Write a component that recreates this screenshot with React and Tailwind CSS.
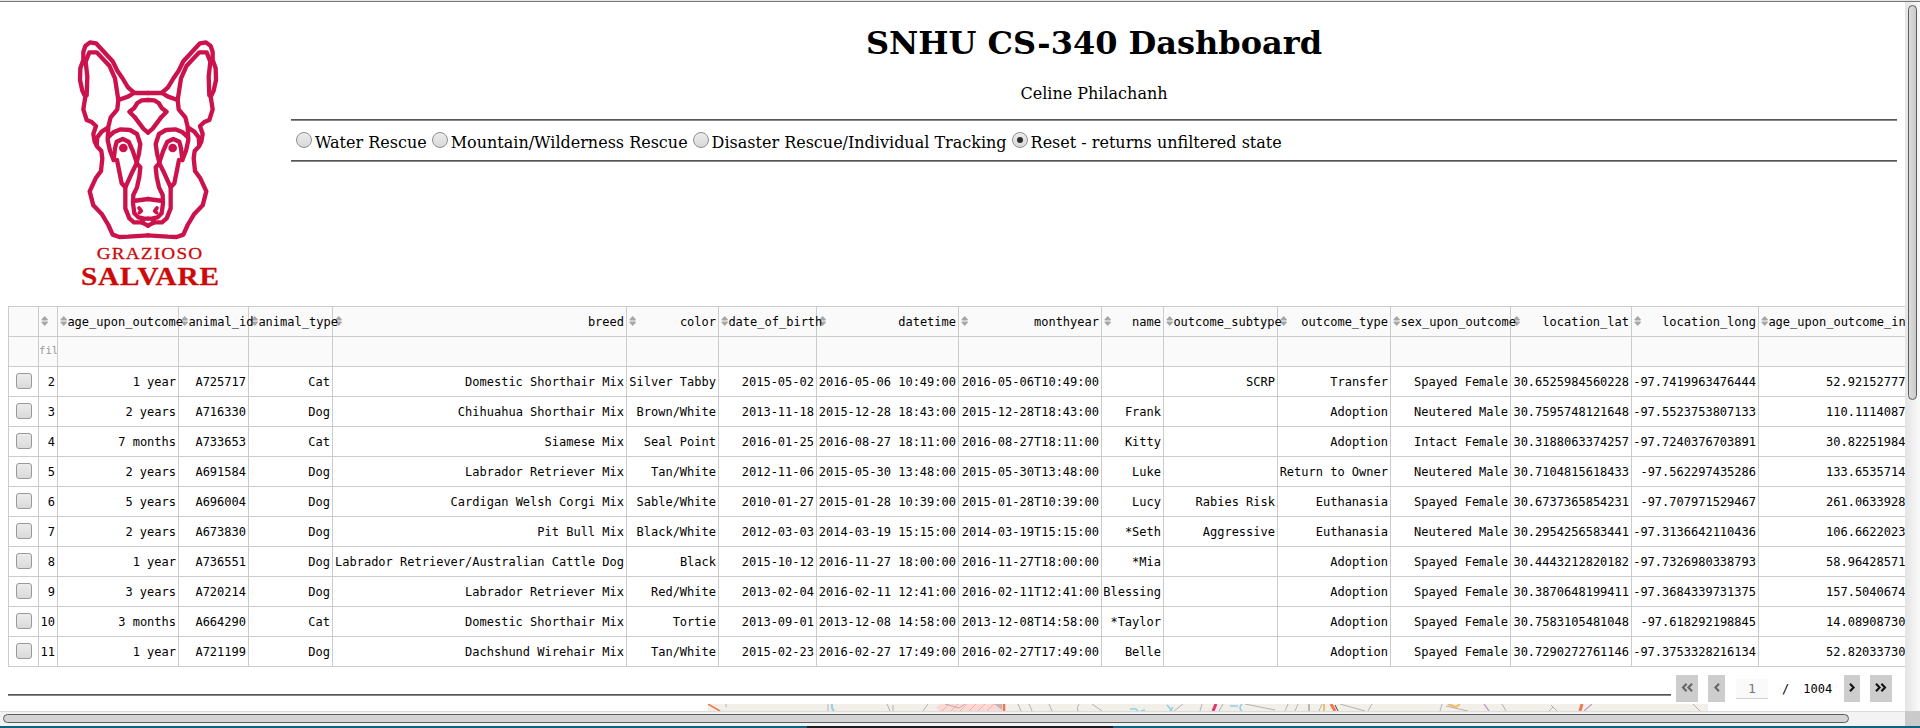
import React from "react";

const COLS =
  "grid grid-cols-[30px_19px_121px_70px_84px_294px_92px_98px_142px_143px_62px_114px_113px_120px_121px_127px_260px] w-[2010px]";

const headers = [
  "", "", "age_upon_outcome", "animal_id", "animal_type", "breed", "color", "date_of_birth", "datetime",
  "monthyear", "name", "outcome_subtype", "outcome_type", "sex_upon_outcome", "location_lat", "location_long",
  "age_upon_outcome_in",
];

const rows = [
  ["2", "1 year", "A725717", "Cat", "Domestic Shorthair Mix", "Silver Tabby", "2015-05-02", "2016-05-06 10:49:00", "2016-05-06T10:49:00", "", "SCRP", "Transfer", "Spayed Female", "30.6525984560228", "-97.7419963476444", "52.92152777"],
  ["3", "2 years", "A716330", "Dog", "Chihuahua Shorthair Mix", "Brown/White", "2013-11-18", "2015-12-28 18:43:00", "2015-12-28T18:43:00", "Frank", "", "Adoption", "Neutered Male", "30.7595748121648", "-97.5523753807133", "110.1114087"],
  ["4", "7 months", "A733653", "Cat", "Siamese Mix", "Seal Point", "2016-01-25", "2016-08-27 18:11:00", "2016-08-27T18:11:00", "Kitty", "", "Adoption", "Intact Female", "30.3188063374257", "-97.7240376703891", "30.82251984"],
  ["5", "2 years", "A691584", "Dog", "Labrador Retriever Mix", "Tan/White", "2012-11-06", "2015-05-30 13:48:00", "2015-05-30T13:48:00", "Luke", "", "Return to Owner", "Neutered Male", "30.7104815618433", "-97.562297435286", "133.6535714"],
  ["6", "5 years", "A696004", "Dog", "Cardigan Welsh Corgi Mix", "Sable/White", "2010-01-27", "2015-01-28 10:39:00", "2015-01-28T10:39:00", "Lucy", "Rabies Risk", "Euthanasia", "Spayed Female", "30.6737365854231", "-97.707971529467", "261.0633928"],
  ["7", "2 years", "A673830", "Dog", "Pit Bull Mix", "Black/White", "2012-03-03", "2014-03-19 15:15:00", "2014-03-19T15:15:00", "*Seth", "Aggressive", "Euthanasia", "Neutered Male", "30.2954256583441", "-97.3136642110436", "106.6622023"],
  ["8", "1 year", "A736551", "Dog", "Labrador Retriever/Australian Cattle Dog", "Black", "2015-10-12", "2016-11-27 18:00:00", "2016-11-27T18:00:00", "*Mia", "", "Adoption", "Spayed Female", "30.4443212820182", "-97.7326980338793", "58.96428571"],
  ["9", "3 years", "A720214", "Dog", "Labrador Retriever Mix", "Red/White", "2013-02-04", "2016-02-11 12:41:00", "2016-02-11T12:41:00", "Blessing", "", "Adoption", "Spayed Female", "30.3870648199411", "-97.3684339731375", "157.5040674"],
  ["10", "3 months", "A664290", "Cat", "Domestic Shorthair Mix", "Tortie", "2013-09-01", "2013-12-08 14:58:00", "2013-12-08T14:58:00", "*Taylor", "", "Adoption", "Spayed Female", "30.7583105481048", "-97.618292198845", "14.08908730"],
  ["11", "1 year", "A721199", "Dog", "Dachshund Wirehair Mix", "Tan/White", "2015-02-23", "2016-02-27 17:49:00", "2016-02-27T17:49:00", "Belle", "", "Adoption", "Spayed Female", "30.7290272761146", "-97.3753328216134", "52.82033730"],
];

function HalfFace() {
  return (
    <g>
      <path d="M402 278 L384 262 L367 234 L352 212 L338 184 L288 130 L270 127 L256 138 L250 156 L250 180 L241 205 L240 240 L247 272 L256 290 L250 328 L260 360 L275 366 L288 378 L280 402 L284 425 L292 440 L304 453 L307 475 L303 513 L287 535 L269 574 L280 616 L306 643 L325 675 L338 704 L358 711 L385 710 L445 706" />
      <path d="M260 286 L262 230 L257 185 L268 157 L290 157 L328 197 L345 235 L355 300 L352 328 L332 352 L325 380 L323 420 L330 452 L341 480" />
      <path d="M445 279 H402 L384 290 L355 300" />
      <path d="M445 300 L425 301 L412 309 L402 325 L388 335 L403 350 L430 386 L444 398" />
      <path d="M324 412 L340 397 L362 388 L390 390 L411 402 L421 432 L417 460 L410 487" />
      <path d="M324 383 L305 395 L292 412 L290 436" />
      <path d="M341 480 L345 445 L350 425 L368 417 L386 425 L398 452 L410 487" />
      <path d="M351 480 L365 550 L376 562 L395 520 L410 490 L421 502 L418 530 L411 562 L400 585 L399 610 L403 640 L415 652 L430 655 L444 656" />
      <path d="M376 560 V625 L388 655 L402 667 L425 667 L444 677" />
      <path d="M425 667 L432 657" />
      <path d="M399 603 L445 597" />
      <circle cx="370" cy="444" r="13" fill="#cc124c" stroke="none" />
      <path d="M417 624 L424 633 L418 638" strokeWidth="11" />
    </g>
  );
}

function Logo() {
  return (
    <svg className="block h-[250px] w-[152px]" viewBox="216 114 456 750">
      <g fill="none" stroke="#cc124c" strokeWidth="13" strokeLinejoin="round" strokeLinecap="round">
        <HalfFace />
        <g transform="translate(888 0) scale(-1 1)">
          <HalfFace />
        </g>
      </g>
      <g fill="#cc0a0a" stroke="#cc0a0a" fontFamily="Liberation Serif, serif">
        <text x="290" y="776" fontSize="48" textLength="320" lengthAdjust="spacingAndGlyphs" letterSpacing="3" strokeWidth="0.8">GRAZIOSO</text>
        <text x="243" y="855" fontSize="74" fontWeight="700" textLength="416" lengthAdjust="spacingAndGlyphs" letterSpacing="2" strokeWidth="0.8">SALVARE</text>
      </g>
    </svg>
  );
}

function Radio({ label, checked }) {
  return (
    <label className="flex h-[19px] items-start whitespace-pre">
      <span className="mr-[3px] ml-[5px] flex size-4 shrink-0 items-center justify-center rounded-full border border-[#8e8e8e] bg-linear-to-b from-[#ececec] to-[#d8d8d8]">
        {checked && <span className="size-1.5 rounded-full bg-[#2d2d2d]" />}
      </span>
      <span className="pt-px leading-[19px]">{label}</span>
    </label>
  );
}

function Rule({ className }) {
  return <div className={"h-0.5 border-t border-b border-t-[#555] border-b-[#888] " + className} />;
}

function SortIcon() {
  return (
    <svg className="mb-px ml-[2px] h-[10px] w-[7.4px] shrink-0" viewBox="0 0 8 10" preserveAspectRatio="none" fill="#a6a6a6">
      <path d="M4 0 L7.5 3.4 Q7.6 4.5 6.6 4.5 H1.4 Q0.4 4.5 0.5 3.4 Z" />
      <path d="M4 10 L7.5 6.6 Q7.6 5.5 6.6 5.5 H1.4 Q0.4 5.5 0.5 6.6 Z" />
    </svg>
  );
}

const cell = "flex h-[30px] items-center justify-end border-b border-l border-[#cccccc] pt-[2px] pr-[2px] whitespace-pre";

function Table() {
  return (
    <div className="w-full overflow-hidden border-t border-[#cccccc] font-['DejaVu_Sans_Mono',monospace] text-[12px] leading-[15px]">
      <div className={COLS + " bg-[#fafafa]"}>
        {headers.map((h, i) => (
          <div key={i} className="flex h-[30px] min-w-0 items-center border-b border-l border-[#cccccc] pr-[2px] whitespace-pre">
            {i > 0 && <SortIcon />}
            <span className={(i === 16 ? "" : "ml-auto") + " relative z-10 pt-[2px]"}>{h}</span>
          </div>
        ))}
      </div>
      <div className={COLS + " bg-[#fafafa]"}>
        {headers.map((h, i) => (
          <div key={i} className="h-[30px] overflow-hidden border-b border-l border-[#cccccc] pt-[6px] pl-px text-[10.6px] whitespace-pre text-[#999]">
            {i === 1 ? <span className="-ml-px">fil</span> : ""}
          </div>
        ))}
      </div>
      {rows.map((r) => (
        <div key={r[0]} className={COLS}>
          <div className="h-[30px] border-b border-l border-[#cccccc] pt-[6px] pl-[7px]">
            <span className="block size-4 rounded-[3px] border border-[#999] bg-linear-to-b from-[#ececec] to-[#dadada]" />
          </div>
          {r.map((v, i) =>
            i === 15 ? (
              <div key={i} className="flex h-[30px] items-center border-b border-l border-[#cccccc] pt-[2px] pl-[67px]">{v}</div>
            ) : (
              <div key={i} className={cell}>{v}</div>
            )
          )}
        </div>
      ))}
    </div>
  );
}

function Chevrons({ double, left, color }) {
  return (
    <svg
      className={(double ? "w-[12px]" : "w-[6px]") + " mb-[2px] h-[9px] " + (left ? "-scale-x-100" : "")}
      viewBox={double ? "0 0 12 9" : "0 0 6 9"}
      fill="none"
      stroke={color}
      strokeWidth="2.1"
    >
      <path d="M1 0.8 L4.6 4.5 L1 8.2" />
      {double && <path d="M6.4 0.8 L10 4.5 L6.4 8.2" />}
    </svg>
  );
}

function Pager() {
  const btn = "flex h-[27px] items-center justify-center bg-[#cdcdcd] ";
  return (
    <div className="flex h-[27px] items-start font-['DejaVu_Sans_Mono',monospace] text-[12px]">
      <div className={btn + "w-[22px]"}><Chevrons double left color="#666" /></div>
      <div className={btn + "ml-[10px] w-[17px]"}><Chevrons left color="#666" /></div>
      <div className="mt-[4px] ml-[11px] h-[20px] w-[32px] border-b border-[#d3d3d3] bg-[#fafafa] text-center text-[13px] leading-[20px] text-[#777]">1</div>
      <div className="ml-[14px] leading-[29px]">/</div>
      <div className="ml-[14px] leading-[29px]">1004</div>
      <div className={btn + "ml-[12px] w-[16px]"}><Chevrons color="#111" /></div>
      <div className={btn + "ml-[10px] w-[22px]"}><Chevrons double color="#111" /></div>
    </div>
  );
}

function MapStrip() {
  return (
    <svg className="block h-[7px] w-[1000px] bg-[#f2efe9]" viewBox="0 0 1000 7" fill="none">
      <path d="M228 3 L233 0 H294 V7 H231 Z" fill="#fbd9d2" />
      <path d="M286 0 H294 V6 Z" fill="#c9b2b2" />
      <path d="M234 7 L241 0 M243 7 L250 0 M252 7 L259 0 M261 7 L268 0 M270 7 L277 0 M279 7 L286 0" stroke="#f3b0aa" />
      <path d="M0 0 L12 7" stroke="#f4764f" strokeWidth="1.6" />
      <path d="M296 0 V7" stroke="#f4764f" strokeWidth="2.5" />
      <path d="M124 0 Q123 4 126 7" stroke="#8fd0e2" strokeWidth="2" />
      <path d="M422 5 h6 l2 2 M433 7 l4 -1 M459 1 l5 6 M465 3 l-3 4 M522 2 h8 M534 0 q-4 4 0 7" stroke="#8fd0e2" strokeWidth="1.5" />
      <path d="M508 0 L505 7" stroke="#e0376f" strokeWidth="3" />
      <path d="M18 0 v3 M120 0 v7 M179 0 l3 7 M185 1 v6 M220 0 l-5 7 M237 0 l14 4 6 -4 M310 0 l3 7 M321 0 l3 7 M341 0 l3 7 M371 0 q-3 4 -1 7 M384 0 l10 7 M475 0 l-9 7 M494 0 l-2 7 M515 0 l-4 7 M537 0 l30 6 M580 0 l-3 7 M590 0 l-3 7 M614 0 l-3 7 M632 0 l25 7 M664 0 l-4 7 M734 0 l-2 7 M738 2 l22 5 M794 0 l4 7 M843 1 l6 6 M841 7 l4 -4 M985 0 l7 7" stroke="#b4b0b5" />
      <path d="M776 0 l5 7 M884 0 l-8 7" stroke="#bfa0c4" strokeWidth="1.3" />
      <path d="M601 0 V7" stroke="#7e8478" />
      <path d="M616 0 V7 M740 0 l8 3 4 -3" stroke="#f5bb62" strokeWidth="2" />
      <path d="M623 0 L627 7 M874 0 L872 7" stroke="#f4764f" strokeWidth="3" />
      <path d="M627 1 L630 7" stroke="#444" strokeWidth="1" />
    </svg>
  );
}

export default function App() {
  return (
    <div className="flex h-[728px] w-[1920px] flex-col overflow-hidden bg-white font-['DejaVu_Serif',serif] text-[16px] text-black">
      <div className="h-0.5 shrink-0 border-b border-[#777] bg-[#e6e6e6]" />
      <div className="flex h-[709px] shrink-0">
        <div className="flex w-[1905px] flex-col overflow-hidden">
          <div className="flex h-[304px] shrink-0">
            <div className="w-[291px] shrink-0 pt-9 pl-[72px]">
              <Logo />
            </div>
            <div className="w-[1606px]">
              <h1 className="pt-[22px] text-center text-[32px] leading-[38px] font-bold">SNHU CS-340 Dashboard</h1>
              <p className="pt-[22px] text-center leading-[19px]">Celine Philachanh</p>
              <Rule className="mt-4" />
              <div className="flex h-[39px] pt-[11px]">
                <Radio label="Water Rescue" />
                <Radio label="Mountain/Wilderness Rescue" />
                <Radio label="Disaster Rescue/Individual Tracking" />
                <Radio label="Reset - returns unfiltered state" checked />
              </div>
              <Rule className="" />
            </div>
          </div>
          <div className="pl-2">
            <Table />
          </div>
          <div className="flex h-[37px] shrink-0 pt-2 pl-2">
            <Rule className="mt-[19px] w-[1663px]" />
            <div className="pl-[5px]">
              <Pager />
            </div>
          </div>
          <div className="h-[7px] shrink-0 pl-[708px]">
            <MapStrip />
          </div>
        </div>
        <div className="w-[15px] bg-linear-to-r from-[#e4e4e4] to-[#fafafa] pt-[3px] pl-[3px]">
          <div className="h-[395px] w-[9px] rounded-full border border-[#5c5c5c] bg-linear-to-r from-[#dcdcdc] to-[#cacaca]" />
        </div>
      </div>
      <div className="flex h-[15px] shrink-0">
        <div className="w-[1905px] border-t border-[#dcdcdc] bg-[#f3f3f3] pt-[2px] pl-[3px]">
          <div className="h-[9px] w-[1846px] rounded-full border border-[#5c5c5c] bg-[#d4d4d4]" />
        </div>
        <div className="w-[15px] bg-[#cacaca]" />
      </div>
      <div className="flex h-[2px] bg-[#0b6384]">
        <div className="ml-[807px] w-[306px] bg-[#1c1c22]" />
      </div>
    </div>
  );
}
